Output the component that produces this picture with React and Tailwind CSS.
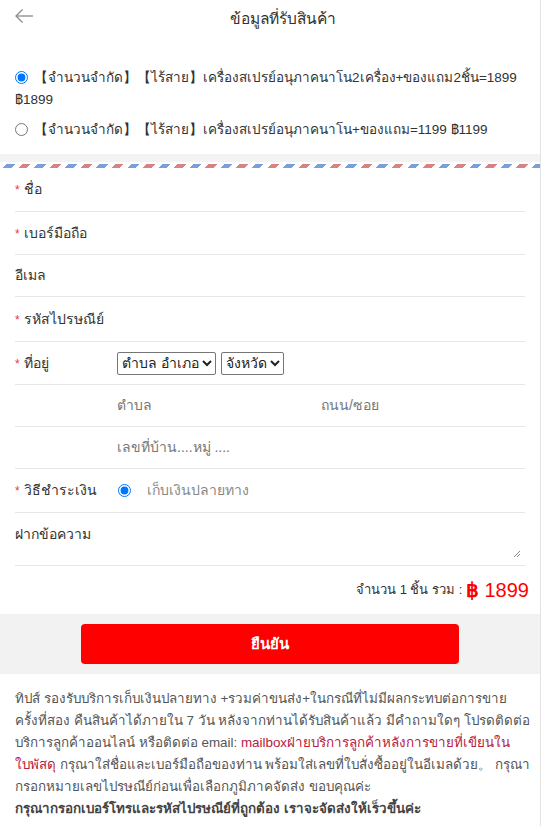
import React from "react";

function Row({ label, required, children, className = "" }) {
  return (
    <div className={`flex items-center border-b border-[#e6e6e6] ${className}`}>
      <div className="w-[102px] shrink-0 text-[14px] text-[#333]">
        {required && <span className="text-[#e4393c] mr-[4px] text-[12px]">*</span>}
        {label}
      </div>
      <div className="flex-1 flex items-center">{children}</div>
    </div>
  );
}

export default function App() {
  return (
    <div
      className="w-[541px] min-h-[826px] bg-white border-r border-[#e3e3e3] text-[#333]"
      style={{ fontFamily: '"Liberation Sans", "Noto Sans", Tahoma, sans-serif' }}
    >
      {/* header */}
      <div className="relative h-[37px] flex items-center justify-center pl-[26px]">
        <div className="absolute left-[14px] top-[8px] text-[#8a8a8a]">
          <svg width="20" height="16" viewBox="0 0 20 16" fill="none" stroke="currentColor" strokeWidth="1.3">
            <path d="M19 8H2" />
            <path d="M8.5 1.5L2 8l6.5 6.5" />
          </svg>
        </div>
        <div className="text-[15.5px] text-[#333]">ข้อมูลที่รับสินค้า</div>
      </div>

      {/* options */}
      <div className="px-[15px] pt-[30px] pb-[13px] flex flex-col gap-[8px] text-[13.5px] leading-[22px]">
        <label className="block">
          <input type="radio" name="opt" defaultChecked className="w-[13px] h-[13px] align-[-2px] mr-[6px] accent-[#0075ff]" />
          【จำนวนจำกัด】【ไร้สาย】เครื่องสเปรย์อนุภาคนาโน2เครื่อง+ของแถม2ชิ้น=1899 ฿1899
        </label>
        <label className="block">
          <input type="radio" name="opt" className="w-[13px] h-[13px] align-[-2px] mr-[6px]" />
          【จำนวนจำกัด】【ไร้สาย】เครื่องสเปรย์อนุภาคนาโน+ของแถม=1199 ฿1199
        </label>
      </div>

      <div className="h-[8px] bg-[#f3f3f3]"></div>
      <div className="h-[2px]"></div>
      <div className="h-[4px] bg-[repeating-linear-gradient(-45deg,#7b9fdb_0px,#7b9fdb_6px,transparent_6px,transparent_11px,#d78383_11px,#d78383_17px,transparent_17px,transparent_22px)]"></div>

      {/* form */}
      <div className="px-[15px]">
        <Row label="ชื่อ" required className="h-[44px]" />
        <Row label="เบอร์มือถือ" required className="h-[43px]" />
        <Row label="อีเมล" className="h-[42px]" />
        <Row label="รหัสไปรษณีย์" required className="h-[45px]" />
        <Row label="ที่อยู่" required className="h-[43px]">
          <div className="flex gap-[5px]">
            <div className="h-[23px] border border-[#767676] rounded-[2px] pl-[4px] pr-[3px] flex items-center gap-[3px] text-[14px] text-[#222]">
              ตำบล อำเภอ
              <svg width="10" height="7" viewBox="0 0 10 7" fill="none" stroke="#222" strokeWidth="2"><path d="M1 1l4 4 4-4" /></svg>
            </div>
            <div className="h-[23px] border border-[#767676] rounded-[2px] pl-[4px] pr-[3px] flex items-center gap-[3px] text-[14px] text-[#222]">
              จังหวัด
              <svg width="10" height="7" viewBox="0 0 10 7" fill="none" stroke="#222" strokeWidth="2"><path d="M1 1l4 4 4-4" /></svg>
            </div>
          </div>
        </Row>
        <Row label="" className="h-[42px]">
          <div className="w-[204px] text-[14px] text-[#777]">ตำบล</div>
          <div className="text-[14px] text-[#777]">ถนน/ซอย</div>
        </Row>
        <Row label="" className="h-[42px]">
          <div className="text-[14px] text-[#777]">เลขที่บ้าน....หมู่ ....</div>
        </Row>
        <Row label="วิธีชำระเงิน" required className="h-[44px]">
          <input type="radio" defaultChecked className="w-[13px] h-[13px] ml-[1px] mr-[16px] accent-[#0075ff]" />
          <span className="text-[14px] text-[#888]">เก็บเงินปลายทาง</span>
        </Row>
        <div className="relative h-[53px] border-b border-[#e6e6e6] pt-[11px] text-[14px] text-[#333]">
          ฝากข้อความ
          <svg className="absolute right-[4px] bottom-[7px]" width="8" height="8" viewBox="0 0 8 8" stroke="#888" strokeWidth="1">
            <path d="M1 7L7 1M4 7L7 4" />
          </svg>
        </div>
        <div className="h-[48px] flex items-center justify-end mr-[-4px] text-[13px] text-[#333]">
          <span>จำนวน 1 ชิ้น รวม :&nbsp;</span>
          <span className="text-[#f00] text-[20px] leading-none"><b>฿</b> 1899</span>
        </div>
      </div>

      {/* button band */}
      <div className="bg-[#f2f2f2] h-[60px] flex items-center justify-center">
        <button className="w-[378px] h-[40px] bg-[#ff0000] rounded-[4px] text-white text-[15px] font-bold">ยืนยัน</button>
      </div>

      {/* tips */}
      <div className="px-[15px] pt-[14px] pb-[10px] text-[13.4px] leading-[22px] text-[#555] whitespace-nowrap">
        <div>ทิปส์ รองรับบริการเก็บเงินปลายทาง +รวมค่าขนส่ง+ในกรณีที่ไม่มีผลกระทบต่อการขาย</div>
        <div>ครั้งที่สอง คืนสินค้าได้ภายใน 7 วัน หลังจากท่านได้รับสินค้าแล้ว มีคำถามใดๆ โปรดติดต่อ</div>
        <div>บริการลูกค้าออนไลน์ หรือติดต่อ email: <span className="text-[#b8203c]">mailboxฝ่ายบริการลูกค้าหลังการขายที่เขียนใน</span></div>
        <div><span className="text-[#b8203c]">ใบพัสดุ</span> กรุณาใส่ชื่อและเบอร์มือถือของท่าน พร้อมใส่เลขที่ใบสั่งซื้ออยู่ในอีเมลด้วย。 กรุณา</div>
        <div>กรอกหมายเลขไปรษณีย์ก่อนเพื่อเลือกภูมิภาคจัดส่ง ขอบคุณค่ะ</div>
        <div className="font-bold text-[#444]">กรุณากรอกเบอร์โทรและรหัสไปรษณีย์ที่ถูกต้อง เราจะจัดส่งให้เร็วขึ้นค่ะ</div>
      </div>
    </div>
  );
}
